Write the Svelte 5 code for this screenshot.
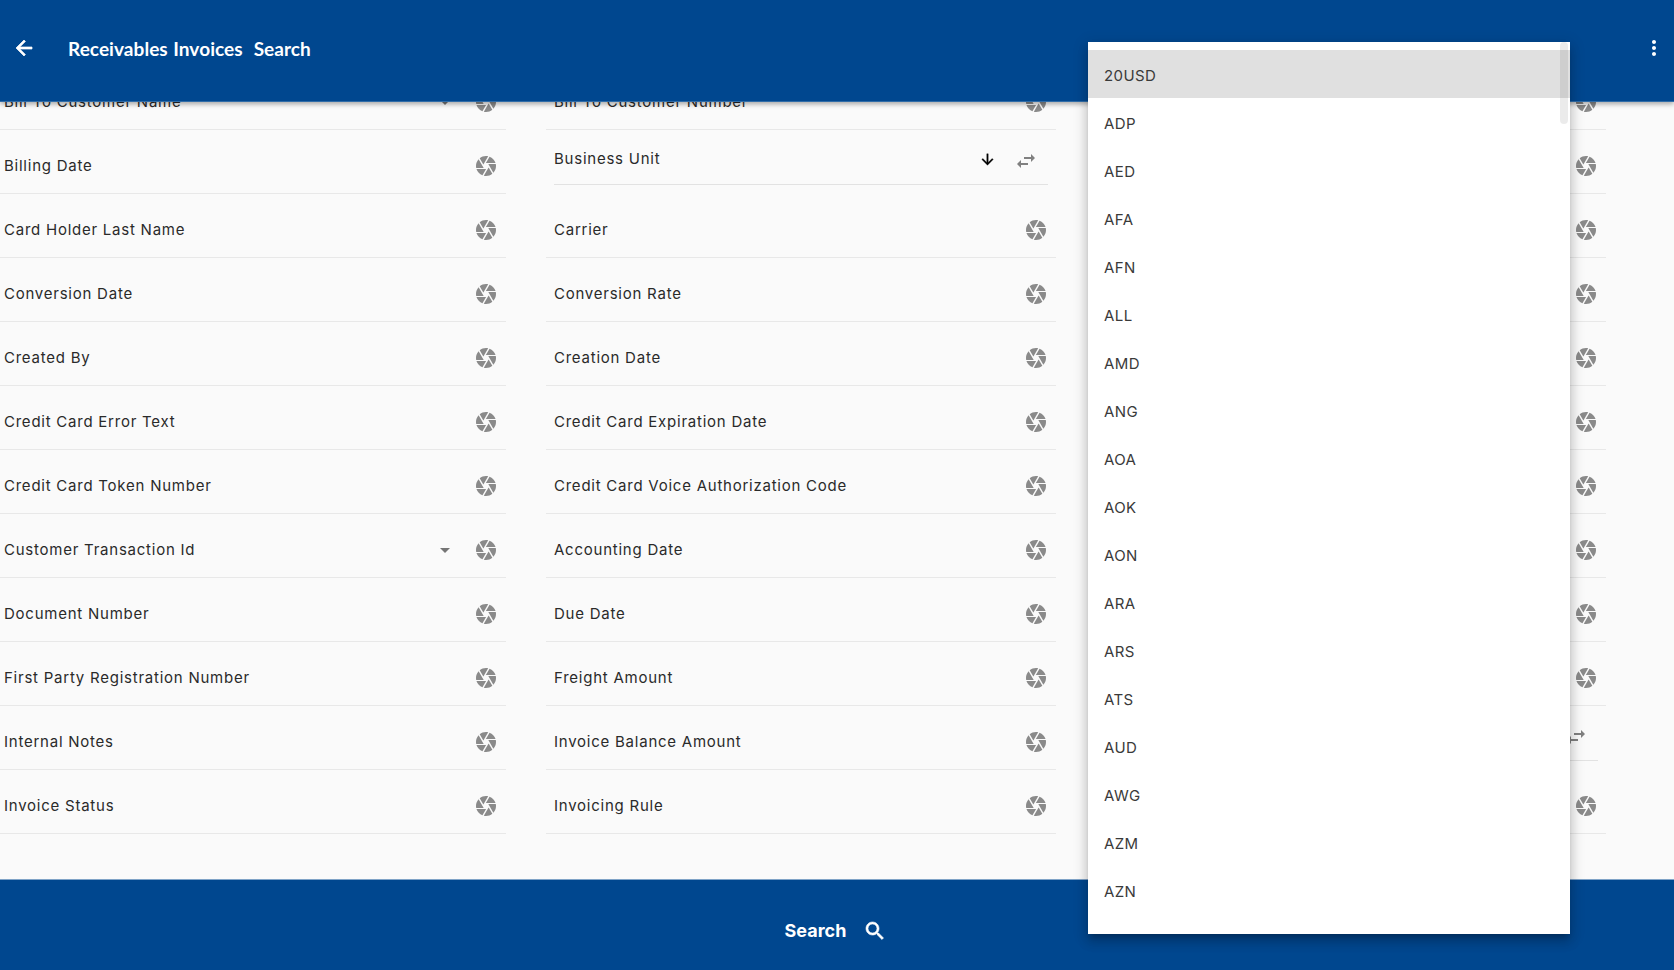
<script>
  const col1 = [
    ['Bill To Customer Name', 'drop'], ['Billing Date'], ['Card Holder Last Name'], ['Conversion Date'], ['Created By'],
    ['Credit Card Error Text'], ['Credit Card Token Number'], ['Customer Transaction Id', 'drop'], ['Document Number'],
    ['First Party Registration Number'], ['Internal Notes'], ['Invoice Status']
  ];
  const col2 = [
    ['Bill To Customer Number'], ['Business Unit', 'edit'], ['Carrier'], ['Conversion Rate'], ['Creation Date'],
    ['Credit Card Expiration Date'], ['Credit Card Voice Authorization Code'], ['Accounting Date'], ['Due Date'],
    ['Freight Amount'], ['Invoice Balance Amount'], ['Invoicing Rule']
  ];
  const col3 = Array.from({ length: 12 }, (_, i) => ['', i === 10 ? 'edit' : '']);
  const rows = [];
  for (let i = 0; i < 12; i++) rows.push(col1[i], col2[i], col3[i]);
  const currencies = ['20USD','ADP','AED','AFA','AFN','ALL','AMD','ANG','AOA','AOK','AON','ARA','ARS','ATS','AUD','AWG','AZM','AZN'];
</script>

<div class="page">
  <header class="top">
    <svg class="back" viewBox="0 0 24 24"><path d="M20 11H7.83l5.59-5.59L12 4l-8 8 8 8 1.41-1.41L7.83 13H20v-2z"/></svg>
    <h1>Receivables Invoices&nbsp; Search</h1>
    <svg class="more" viewBox="0 0 24 24"><path d="M12 8c1.1 0 2-.9 2-2s-.9-2-2-2-2 .9-2 2 .9 2 2 2zm0 2c-1.1 0-2 .9-2 2s.9 2 2 2 2-.9 2-2-.9-2-2-2zm0 6c-1.1 0-2 .9-2 2s.9 2 2 2 2-.9 2-2-.9-2-2-2z"/></svg>
  </header>

  <main class="content">
    <div class="grid">
      {#each rows as [label, kind]}
        {#if kind === 'edit'}
          <div class="row editing">
            <div class="field">
              <span class="label">{label}</span>
              {#if label}
                <svg class="sort" viewBox="0 0 24 24"><path d="M20 12l-1.41-1.41L13 16.17V4h-2v12.17l-5.58-5.59L4 12l8 8 8-8z"/></svg>
              {/if}
              <svg class="swap" viewBox="0 0 24 24"><path d="M6.99 11L3 15l3.99 4v-3H14v-2H6.99v-3zM21 9l-3.99-4v3H10v2h7.01v3L21 9z"/></svg>
            </div>
          </div>
        {:else}
          <div class="row">
            <span class="label">{label}</span>
            {#if kind === 'drop'}
              <svg class="drop" viewBox="0 0 24 24"><path d="M7 10l5 5 5-5z"/></svg>
            {/if}
            <svg class="cam" viewBox="0 0 24 24"><path d="M9.4 10.5l4.77-8.26C13.47 2.09 12.75 2 12 2c-2.4 0-4.6.85-6.32 2.25l3.66 6.35.06-.1zM21.54 9c-.92-2.92-3.15-5.26-6-6.34L11.88 9h9.66zm.26 1h-7.49l.29.5 4.76 8.25C21 16.97 22 14.6 22 12c0-.69-.07-1.35-.2-2zM8.54 12l-3.9-6.75C3.01 7.03 2 9.39 2 12c0 .69.07 1.35.2 2h7.49l-1.15-2zm-6.08 3c.92 2.92 3.15 5.26 6 6.34L12.12 15H2.46zm11.27 0l-3.9 6.76c.7.15 1.42.24 2.17.24 2.4 0 4.6-.85 6.32-2.25l-3.66-6.35-.93 1.6z"/></svg>
          </div>
        {/if}
      {/each}
    </div>
  </main>

  <footer class="bottom">
    <span>Search</span>
    <svg viewBox="0 0 24 24"><path d="M15.5 14h-.79l-.28-.27C15.41 12.59 16 11.11 16 9.5 16 5.91 13.09 3 9.5 3S3 5.91 3 9.5 5.91 16 9.5 16c1.61 0 3.09-.59 4.23-1.57l.27.28v.79l5 4.99L20.49 19l-4.99-5zm-6 0C7.01 14 5 11.99 5 9.5S7.01 5 9.5 5 14 7.01 14 9.5 11.99 14 9.5 14z"/></svg>
  </footer>

  <div class="menu">
    {#each currencies as c, i}
      <div class="item" class:active={i === 0}>{c}</div>
    {/each}
    <div class="thumb"></div>
  </div>
</div>

<style>
  :global(body) { margin: 0; background: #fafafa; }
  .page {
    position: relative;
    height: 970px;
    width: 1674px;
    display: flex;
    flex-direction: column;
    overflow: hidden;
    font-family: Inter, "Noto Sans", sans-serif;
    color: #212121;
  }
  .top {
    position: relative;
    z-index: 2;
    flex: none;
    height: 101px;
    box-sizing: content-box;
    border-bottom: 1px solid #2f6ca8;
    background: #00478f;
    display: flex;
    align-items: center;
    color: #fff;
    box-shadow: 0 2px 5px rgba(0, 0, 0, 0.35);
  }
  .back { width: 24px; height: 24px; fill: #fff; stroke: #fff; stroke-width: 0.7; margin-left: 12px; margin-top: -5px; }
  h1 {
    margin: -5px 0 0 32px;
    font: 700 19px Lato, sans-serif;
    letter-spacing: 0.06px;
    word-spacing: 0.8px;
    color: #fff;
    flex: 1;
  }
  .more { width: 24px; height: 24px; fill: #fff; margin-right: 8px; margin-top: -5px; }
  .content {
    flex: 1;
    min-height: 0;
    overflow: hidden;
    background: #fafafa;
  }
  .grid {
    display: grid;
    grid-template-columns: repeat(3, 510px);
    grid-auto-rows: 64px;
    column-gap: 40px;
    margin-left: -4px;
    margin-top: -36px;
  }
  .row {
    box-sizing: border-box;
    display: flex;
    align-items: center;
    padding: 9px 8px 0;
    border-bottom: 1px solid #e8e8e8;
    font-size: 15px;
    font-weight: 400;
    letter-spacing: 0.76px;
    color: #2a2a2a;
  }
  .label { flex: 1; white-space: nowrap; margin-bottom: 1px; }
  .drop { width: 24px; height: 24px; fill: #757575; margin-right: 17px; }
  .cam { width: 24px; height: 24px; fill: #8a8a8a; margin-right: 0; }
  .editing { border-bottom: none; align-items: flex-start; padding-top: 0; }
  .field {
    flex: 1;
    height: 55px;
    box-sizing: border-box;
    border-bottom: 1px solid #e2e2e2;
    display: flex;
    align-items: center;
    padding-top: 4px;
  }
  .sort { width: 17px; height: 17px; fill: #000; stroke: #000; stroke-width: 0.5; margin-right: 18px; }
  .swap { width: 24px; height: 24px; fill: #808080; margin-right: 10px; margin-top: 4px; }
  .bottom {
    flex: none;
    height: 91px;
    box-sizing: border-box;
    border-top: 1px solid #7fa3c7;
    padding: 11px 2px 0 0;
    background: #00478f;
    display: flex;
    align-items: center;
    justify-content: center;
    gap: 17px;
    color: #fff;
    font-size: 18px;
    font-weight: 700;
  }
  .bottom svg { width: 24px; height: 24px; fill: #fff; stroke: #fff; stroke-width: 0.6; }
  .menu {
    position: absolute;
    z-index: 3;
    left: 1088px;
    top: 42px;
    width: 482px;
    height: 892px;
    box-sizing: border-box;
    padding-top: 8px;
    background: #fff;
    overflow: hidden;
    box-shadow: 0 5px 5px -3px rgba(0,0,0,.2), 0 8px 10px 1px rgba(0,0,0,.14), 0 3px 14px 2px rgba(0,0,0,.12);
  }
  .item {
    height: 48px;
    line-height: 51px;
    padding-left: 16px;
    font-size: 15px;
    letter-spacing: 0.4px;
    color: #3a3a3a;
  }
  .item.active { background: #e0e0e0; }
  .thumb {
    position: absolute;
    right: 2px;
    top: 0;
    width: 8px;
    height: 82px;
    border-radius: 4px;
    background: rgba(0, 0, 0, 0.08);
  }
</style>
